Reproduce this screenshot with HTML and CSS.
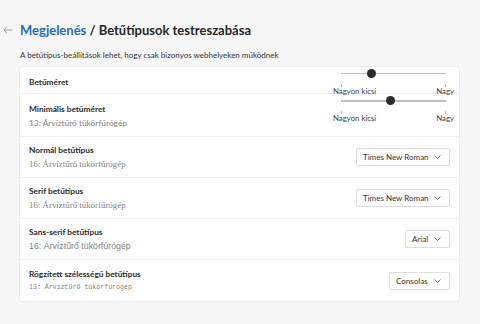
FILE: index.html
```html
<!DOCTYPE html>
<html lang="hu">
<head>
<meta charset="utf-8">
<title>Betűtípusok testreszabása</title>
<link rel="stylesheet" href="styles.css">
</head>
<body>
<div class="page">
  <div class="header">
    <svg class="back" width="10" height="8" viewBox="0 0 10 8"><path d="M9.5 4H1M4 0.8L0.8 4L4 7.2" fill="none" stroke="#6d8bad" stroke-width="0.8"/></svg>
    <h1 class="title"><span class="crumb">Megjelenés</span> / Betűtípusok testreszabása</h1>
  </div>
  <p class="note">A betűtípus-beállítások lehet, hogy csak bizonyos webhelyeken működnek</p>
  <div class="card">
    <div class="row row-size">
      <div class="label"><div class="name">Betűméret</div></div>
      <div class="slider">
        <div class="track"><div class="thumb" style="left: 29%"></div></div>
        <div class="ticks"><span></span><span></span></div>
        <div class="scale"><span>Nagyon kicsi</span><span>Nagy</span></div>
      </div>
    </div>
    <div class="row row-min">
      <div class="label"><div class="name">Minimális betűméret</div><div class="sample sample-ui">13: Árvíztűrő tükörfúrógép</div></div>
      <div class="slider">
        <div class="track"><div class="thumb" style="left: 47%"></div></div>
        <div class="ticks"><span></span><span></span></div>
        <div class="scale"><span>Nagyon kicsi</span><span>Nagy</span></div>
      </div>
    </div>
    <div class="row">
      <div class="label"><div class="name">Normál betűtípus</div><div class="sample sample-serif">16: Árvíztűrő tükörfúrógép</div></div>
      <div class="select select-wide">Times New Roman<svg class="chev" width="7" height="4" viewBox="0 0 7 4"><path d="M0.5 0.5L3.5 3.5L6.5 0.5" fill="none" stroke="#555" stroke-width="0.8"/></svg></div>
    </div>
    <div class="row">
      <div class="label"><div class="name">Serif betűtípus</div><div class="sample sample-serif">16: Árvíztűrő tükörfúrógép</div></div>
      <div class="select select-wide">Times New Roman<svg class="chev" width="7" height="4" viewBox="0 0 7 4"><path d="M0.5 0.5L3.5 3.5L6.5 0.5" fill="none" stroke="#555" stroke-width="0.8"/></svg></div>
    </div>
    <div class="row">
      <div class="label"><div class="name">Sans-serif betűtípus</div><div class="sample sample-sans">16: Árvíztűrő tükörfúrógép</div></div>
      <div class="select select-arial">Arial<svg class="chev" width="7" height="4" viewBox="0 0 7 4"><path d="M0.5 0.5L3.5 3.5L6.5 0.5" fill="none" stroke="#555" stroke-width="0.8"/></svg></div>
    </div>
    <div class="row row-last">
      <div class="label"><div class="name">Rögzített szélességű betűtípus</div><div class="sample sample-mono">13: Árvíztűrő tükörfúrógép</div></div>
      <div class="select select-cons">Consolas<svg class="chev" width="7" height="4" viewBox="0 0 7 4"><path d="M0.5 0.5L3.5 3.5L6.5 0.5" fill="none" stroke="#555" stroke-width="0.8"/></svg></div>
    </div>
  </div>
</div>
</body>
</html>
```

FILE: styles.css
```css
* { box-sizing: border-box; }
html, body {
  margin: 0;
  padding: 0;
  background: #f7f7f7;
  font-family: Lato, "Noto Sans", sans-serif;
  color: #222;
}
.page {
  width: 480px;
  height: 324px;
  padding-top: 20px;
}
.header {
  display: flex;
  align-items: center;
  height: 20px;
  padding-left: 3px;
}
.back {
  margin-right: 7px;
}
.title {
  margin: 0;
  font-size: 13px;
  font-weight: 700;
  color: #262626;
}
.crumb {
  color: #1b6ec2;
}
.note {
  margin: 10px 0 0 20px;
  font-size: 8px;
  color: #333;
  line-height: 11px;
}
.card {
  margin: 6px 0 0 20px;
  width: 439px;
  background: #fff;
  border-radius: 3px;
  box-shadow: 0 0 0 1px #ececec, 0 1px 2px rgba(0,0,0,0.08);
}
.row {
  display: flex;
  align-items: center;
  justify-content: space-between;
  height: 41px;
  padding: 0 9px;
  border-bottom: 1px solid #f1f1f1;
}
.row-last { border-bottom: none; }
.row-size {
  height: 27px;
  align-items: flex-start;
}
.row-size .label { padding-top: 9px; }
.row-size .slider { margin-top: 1.5px; }
.row-min {
  height: 43px;
  align-items: flex-start;
}
.row-min .label { padding-top: 9px; }
.row-min .slider { margin-top: 2px; }
.name {
  font-size: 8.3px;
  font-weight: 700;
  line-height: 12px;
  color: #2a2a2a;
}
.sample {
  color: #808080;
  margin-top: 2px;
  line-height: 12px;
}
.sample-ui { font-size: 8.4px; }
.sample-serif { font-family: "Liberation Serif", serif; font-size: 8.9px; }
.sample-sans { font-family: "Liberation Sans", sans-serif; font-size: 8.8px; }
.sample-mono { font-family: "Liberation Mono", monospace; font-size: 6.6px; }
.slider {
  width: 121px;
  margin-right: -4px;
  position: relative;
}
.track {
  position: relative;
  height: 9px;
  margin: 0 8px;
}
.track::before {
  content: "";
  position: absolute;
  left: 0;
  right: 0;
  top: 4px;
  height: 1.5px;
  background: #bdbdbd;
}
.thumb {
  position: absolute;
  top: 0;
  width: 9px;
  height: 9px;
  margin-left: -4.5px;
  border-radius: 50%;
  background: #2b2b2b;
}
.ticks {
  display: flex;
  justify-content: space-between;
  margin: 6px 8px 0;
  height: 3px;
}
.ticks span {
  width: 1px;
  height: 3px;
  background: #b5b5b5;
}
.scale {
  display: flex;
  justify-content: space-between;
  font-size: 7.8px;
  line-height: 9px;
  color: #444;
}
.select {
  display: flex;
  align-items: center;
  justify-content: space-between;
  height: 18px;
  padding: 0 8px 0 6px;
  border: 1px solid #dcdcdc;
  border-radius: 2px;
  font-size: 8px;
  color: #333;
  background: #fff;
}
.select-wide { width: 94px; }
.select-arial { width: 45px; }
.select-cons { width: 61px; }
.chev { flex: none; }
```
